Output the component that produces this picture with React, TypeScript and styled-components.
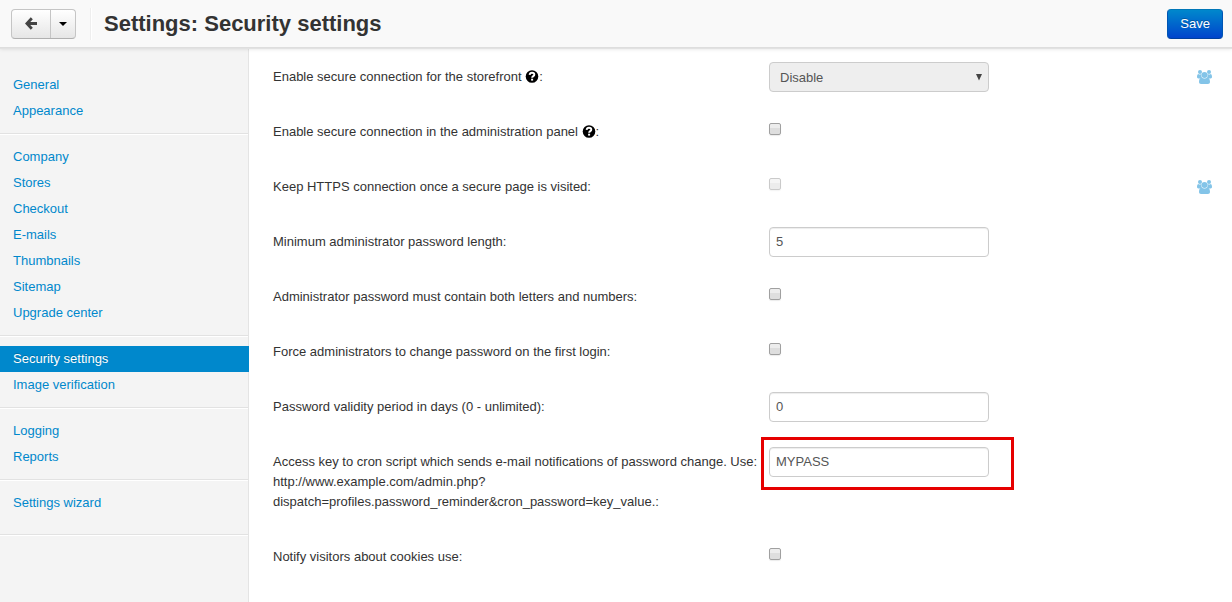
import React from 'react';
import styled, { createGlobalStyle, css } from 'styled-components';

const GlobalStyle = createGlobalStyle`
  * { box-sizing: border-box; }
  body {
    margin: 0;
    background: #fff;
    color: #333;
    font: 13px/20px "Liberation Sans", Arial, sans-serif;
  }
  button, input, select { font: inherit; }
`;

const Page = styled.div`
  display: flex;
  flex-direction: column;
  min-height: 100vh;
`;

const Toolbar = styled.header`
  position: relative;
  display: flex;
  align-items: center;
  height: 47px;
  padding: 0 9px 0 11px;
  background: #f9f9f9;
  box-shadow: 0 1px 0 #dedede, 0 2px 0 #e2e2e2, 0 2px 4px rgba(0, 0, 0, 0.12);
`;

const ButtonGroup = styled.div`
  display: flex;
  height: 30px;
  border: 1px solid #c5c5c5;
  border-bottom-color: #b0b0b0;
  border-radius: 4px;
  background: linear-gradient(#ffffff, #e6e6e6);
`;

const GroupButton = styled.button<{ $width: number }>`
  display: flex;
  align-items: center;
  justify-content: center;
  width: ${(p) => p.$width}px;
  padding: 0;
  border: 0;
  background: none;

  & + & { border-left: 1px solid #c5c5c5; }
`;

const Separator = styled.span`
  width: 2px;
  height: 32px;
  margin: 0 12px 0 14px;
  border-left: 1px solid #eeeeee;
  border-right: 1px solid #ffffff;
`;

const Title = styled.h1`
  flex: 1;
  margin: 0;
  font-size: 22px;
  line-height: 30px;
`;

const SaveButton = styled.button`
  height: 30px;
  padding: 0 12px;
  border: 1px solid #0055b3;
  border-top-color: #0077b8;
  border-bottom-color: #003f9e;
  border-radius: 4px;
  background: linear-gradient(#0088cc, #0044cc);
  color: #fff;
  text-shadow: 0 -1px 0 rgba(0, 0, 0, 0.25);
`;

const Body = styled.div`
  display: flex;
  flex: 1;
`;

const Sidebar = styled.nav`
  flex: 0 0 249px;
  padding-top: 16px;
  border-right: 1px solid #e4e4e4;
  background: #f4f4f4;
`;

const NavGroup = styled.ul`
  margin: 0;
  padding: 9px 0;
  border-bottom: 1px solid #e2e2e2;
  box-shadow: 0 1px 0 #fff;
  list-style: none;

  & + & { margin-top: 1px; }
  &:last-child { padding-bottom: 18px; }
`;

const NavLink = styled.a<{ $active: boolean }>`
  display: block;
  padding: 3px 13px;
  color: #0088cc;
  text-decoration: none;

  ${(p) => p.$active && css`
    margin-right: -1px;
    background: #0088cc;
    color: #fff;
    text-shadow: 0 -1px 0 rgba(0, 0, 0, 0.2);
  `}
`;

const Form = styled.form`
  flex: 1;
  min-width: 0;
  padding: 15px 20px 0 24px;
`;

const Row = styled.div`
  display: grid;
  grid-template-columns: 496px minmax(0, 1fr) auto;
  margin-bottom: 25px;
`;

const Label = styled.label`
  padding: 5px 8px 5px 0;
`;

const Help = styled.svg`
  width: 14px;
  height: 14px;
  vertical-align: -3px;
`;

const Control = styled.div`
  display: flex;
  align-items: flex-start;
`;

const Marked = styled.div`
  position: relative;
  width: 100%;
  max-width: 220px;

  &::after {
    content: '';
    position: absolute;
    inset: -10px -25px -13px -8px;
    border: 3px solid #e60000;
    pointer-events: none;
  }
`;

const fieldStyle = css`
  width: 100%;
  max-width: 220px;
  height: 30px;
  border: 1px solid #cccccc;
  border-radius: 4px;
  color: #555;
`;

const TextInput = styled.input`
  ${fieldStyle}
  display: block;
  padding: 3px 6px 5px;
  background: #fff;
  box-shadow: inset 0 1px 1px rgba(0, 0, 0, 0.075);
`;

const SelectWrap = styled.div`
  position: relative;
  width: 100%;
  max-width: 220px;
`;

const Select = styled.select`
  ${fieldStyle}
  display: block;
  appearance: none;
  padding: 2px 10px 0;
  background: #eeeeee;
  opacity: 1;
`;

const SelectArrow = styled.svg`
  position: absolute;
  top: 12px;
  right: 6px;
  width: 8px;
  height: 7px;
  pointer-events: none;
`;

const Checkbox = styled.input`
  appearance: none;
  width: 12px;
  height: 12px;
  margin: 6px 0;
  border: 1px solid #a0a0a0;
  border-radius: 2px;
  background: linear-gradient(#ededed 38%, #dedede 38%);
  box-shadow: 0 1px 1px rgba(0, 0, 0, 0.08);

  &:disabled { opacity: 0.55; }
`;

const Share = styled.button`
  align-self: start;
  padding: 8px 0 7px;
  border: 0;
  background: none;
  line-height: 0;
`;

const BackIcon = () => (
  <svg width="12" height="13" viewBox="0 0 12 13" fill="none" stroke="#444" strokeWidth="2.8" aria-hidden="true">
    <path d="M6.8 1.2 L1.9 6.5 L6.8 11.8 M2 6.5 H12" />
  </svg>
);

const CaretIcon = () => (
  <svg width="8" height="4" viewBox="0 0 8 4" aria-hidden="true">
    <path d="M0 0H8L4 4Z" fill="#000" />
  </svg>
);

const HelpIcon = () => (
  <Help viewBox="0 0 14 14" aria-hidden="true">
    <circle cx="7" cy="6.5" r="6.3" fill="#000" />
    <path d="M4.6 4.9C4.8 3.3 5.8 2.8 7 2.8C8.4 2.8 9.3 3.6 9.3 4.7C9.3 6.1 7.1 6.2 7.1 7.8" fill="none" stroke="#fff" strokeWidth="1.9" />
    <rect x="6.1" y="8.7" width="2" height="1.9" fill="#fff" />
  </Help>
);

const GroupIcon = () => (
  <svg width="15" height="14" viewBox="0 0 15 14" fill="#83c4e8" aria-hidden="true">
    <circle cx="3" cy="2" r="2" />
    <circle cx="12" cy="2" r="2" />
    <path d="M1.2 3.9C2.4 4.7 3.5 4.7 4.5 4.1C4.1 6 4.4 7 5.2 7.8C4.2 7.8 3.3 8 2.8 8.5H1.5C.5 8.5 0 8 0 7.1C0 5.8.2 4.2 1.2 3.9Z" />
    <path d="M13.8 3.9C12.6 4.7 11.5 4.7 10.5 4.1C10.9 6 10.6 7 9.8 7.8C10.8 7.8 11.7 8 12.2 8.5H13.5C14.5 8.5 15 8 15 7.1C15 5.8 14.8 4.2 13.8 3.9Z" />
    <circle cx="7.5" cy="5" r="3" />
    <path d="M4.5 7.5C6.3 8.7 8.7 8.7 10.5 7.5C12.3 7.8 13 9.9 13 12C13 13.3 12.2 14 11 14H4C2.8 14 2 13.3 2 12C2 9.9 2.7 7.8 4.5 7.5Z" />
  </svg>
);

const navGroups = [
  ['General', 'Appearance'],
  ['Company', 'Stores', 'Checkout', 'E-mails', 'Thumbnails', 'Sitemap', 'Upgrade center'],
  ['Security settings', 'Image verification'],
  ['Logging', 'Reports'],
  ['Settings wizard'],
];

type Setting = {
  id: string;
  label: string;
  kind: 'select' | 'checkbox' | 'text';
  value?: string;
  help?: boolean;
  disabled?: boolean;
  shared?: boolean;
  marked?: boolean;
};

const settings: Setting[] = [
  { id: 'secure_storefront', label: 'Enable secure connection for the storefront', kind: 'select', value: 'Disable', help: true, disabled: true, shared: true },
  { id: 'secure_admin', label: 'Enable secure connection in the administration panel', kind: 'checkbox', help: true },
  { id: 'keep_https', label: 'Keep HTTPS connection once a secure page is visited', kind: 'checkbox', disabled: true, shared: true },
  { id: 'min_length', label: 'Minimum administrator password length', kind: 'text', value: '5' },
  { id: 'mixed_password', label: 'Administrator password must contain both letters and numbers', kind: 'checkbox' },
  { id: 'force_change', label: 'Force administrators to change password on the first login', kind: 'checkbox' },
  { id: 'validity', label: 'Password validity period in days (0 - unlimited)', kind: 'text', value: '0' },
  { id: 'cron_key', label: 'Access key to cron script which sends e-mail notifications of password change. Use: http://www.example.com/admin.php?dispatch=profiles.password_reminder&cron_password=key_value.', kind: 'text', value: 'MYPASS', marked: true },
  { id: 'cookies', label: 'Notify visitors about cookies use', kind: 'checkbox' },
];

const Field = ({ setting }: { setting: Setting }) => {
  const { id, kind, value, disabled, marked } = setting;
  if (kind === 'checkbox') return <Checkbox id={id} type="checkbox" disabled={disabled} />;
  if (kind === 'select') {
    return (
      <SelectWrap>
        <Select id={id} disabled={disabled}>
          <option>{value}</option>
        </Select>
        <SelectArrow viewBox="0 0 8 7" aria-hidden="true">
          <path d="M1 0H7L4 6.4Z" fill="#444" />
        </SelectArrow>
      </SelectWrap>
    );
  }
  const input = <TextInput id={id} type="text" defaultValue={value} />;
  return marked ? <Marked>{input}</Marked> : input;
};

export default function App() {
  return (
    <Page>
      <GlobalStyle />
      <Toolbar>
        <ButtonGroup>
          <GroupButton type="button" $width={38} aria-label="Back"><BackIcon /></GroupButton>
          <GroupButton type="button" $width={25} aria-label="Recent pages"><CaretIcon /></GroupButton>
        </ButtonGroup>
        <Separator />
        <Title>Settings: Security settings</Title>
        <SaveButton type="submit" form="settings">Save</SaveButton>
      </Toolbar>
      <Body>
        <Sidebar>
          {navGroups.map((items) => (
            <NavGroup key={items[0]}>
              {items.map((item) => (
                <li key={item}>
                  <NavLink href="#" $active={item === 'Security settings'}>{item}</NavLink>
                </li>
              ))}
            </NavGroup>
          ))}
        </Sidebar>
        <Form id="settings">
          {settings.map((setting) => (
            <Row key={setting.id}>
              <Label htmlFor={setting.id}>
                {setting.help ? <>{setting.label} <HelpIcon />:</> : `${setting.label}:`}
              </Label>
              <Control><Field setting={setting} /></Control>
              {setting.shared && <Share type="button" aria-label="Update for all stores"><GroupIcon /></Share>}
            </Row>
          ))}
        </Form>
      </Body>
    </Page>
  );
}
